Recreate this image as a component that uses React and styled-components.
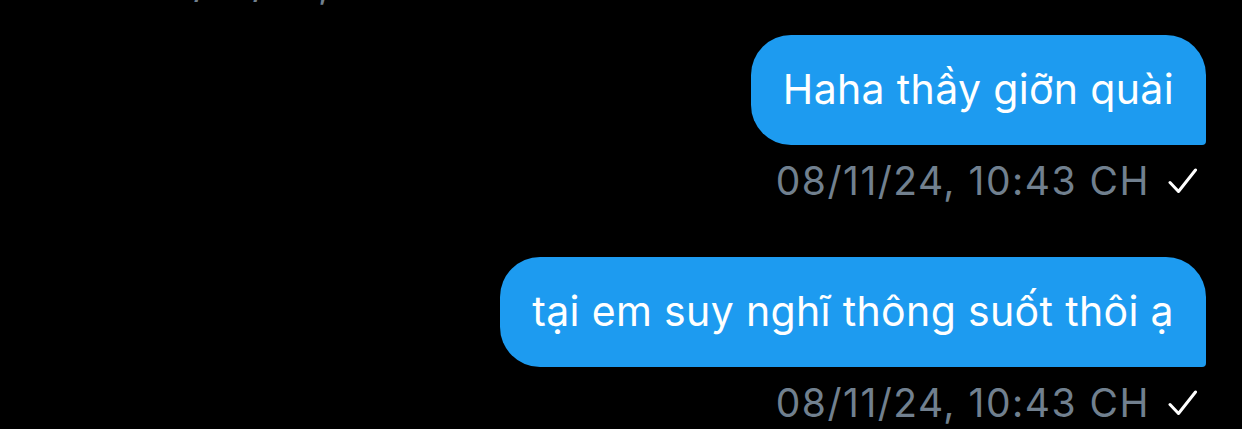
import React from 'react';
import styled, { createGlobalStyle } from 'styled-components';

const Colors = {
  background: '#000000',
  bubble: '#1d9bf0',
  bubbleText: '#ffffff',
  meta: '#71808f',
  check: '#ffffff',
};

const GlobalStyle = createGlobalStyle`
  html, body {
    margin: 0;
    padding: 0;
    background: ${Colors.background};
    overflow: hidden;
  }
  body {
    font-family: Inter, "Noto Sans", "Liberation Sans", sans-serif;
    -webkit-font-smoothing: antialiased;
  }
`;

const Thread = styled.div`
  display: flex;
  flex-direction: column;
  align-items: stretch;
  width: 1242px;
  height: 429px;
  padding: 0 36px 0 142px;
  box-sizing: border-box;
  overflow: hidden;
`;

const Message = styled.div`
  display: flex;
  flex-direction: column;
  align-items: ${p => (p.$mine ? 'flex-end' : 'flex-start')};
  margin-bottom: 28px;
`;

const Bubble = styled.div`
  display: flex;
  align-items: center;
  height: 110px;
  padding: 0 32px;
  box-sizing: border-box;
  background: ${Colors.bubble};
  color: ${Colors.bubbleText};
  border-radius: 40px 40px 4px 40px;
  font-size: 41px;
  line-height: 1.21;
  letter-spacing: 0.35px;
  white-space: nowrap;
`;

const Meta = styled.div`
  display: flex;
  align-items: flex-start;
  gap: 18px;
  height: 84px;
  padding: 12px 8px 0 0;
  box-sizing: border-box;
  align-self: ${p => (p.$left ? 'flex-start' : 'auto')};
  color: ${Colors.meta};
  font-size: 39px;
  line-height: 47px;
  letter-spacing: 1.5px;
  white-space: nowrap;

  svg {
    flex: none;
    margin-top: 10px;
  }
`;

const PrevMeta = styled(Meta)`
  height: auto;
  padding: 0;
  margin-top: -38px;
  margin-bottom: 29px;
  line-height: 44px;
`;

const Check = () => (
  <svg width="30" height="28" viewBox="0 0 30 28" fill="none">
    <path
      d="M2 15.5 L10.5 24.5 L27.5 3"
      stroke={Colors.check}
      strokeWidth="3"
      strokeLinecap="round"
      strokeLinejoin="round"
    />
  </svg>
);

const messages = [
  { id: 1, text: 'Haha thầy giỡn quài', time: '08/11/24, 10:43 CH' },
  { id: 2, text: 'tại em suy nghĩ thông suốt thôi ạ', time: '08/11/24, 10:43 CH' },
];

const App = () => (
  <>
    <GlobalStyle />
    <Thread>
      <PrevMeta $left>02/10/24, 10:40 CH</PrevMeta>
      {messages.map(m => (
        <Message key={m.id} $mine>
          <Bubble>{m.text}</Bubble>
          <Meta>
            <span>{m.time}</span>
            <Check />
          </Meta>
        </Message>
      ))}
    </Thread>
  </>
);

export default App;
